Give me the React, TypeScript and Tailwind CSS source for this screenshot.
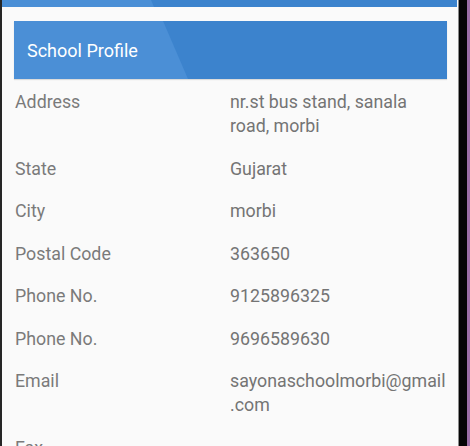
import React from "react";

const rows: { label: string; value: React.ReactNode }[] = [
  { label: "Address", value: "nr.st bus stand, sanala road, morbi" },
  { label: "State", value: "Gujarat" },
  { label: "City", value: "morbi" },
  { label: "Postal Code", value: "363650" },
  { label: "Phone No.", value: "9125896325" },
  { label: "Phone No.", value: "9696589630" },
  {
    label: "Email",
    value: (
      <>
        sayonaschoolmorbi@gmail
        <wbr />
        .com
      </>
    ),
  },
  { label: "Fax", value: "" },
];

export default function App() {
  return (
    <div className="flex h-[446px] w-[470px] overflow-hidden bg-black font-['Roboto',sans-serif]">
      {/* phone screen */}
      <div className="flex w-[459px] shrink-0 flex-col border-l-2 border-r border-l-[#262626] border-r-[#8a8a8a] bg-[#fafafa]">
        {/* app bar edge */}
        <div className="relative mr-[1px] h-[7px] shrink-0 overflow-hidden bg-[#3c83cd]">
          <div className="absolute inset-0 bg-[#4a8fd6] [clip-path:polygon(0_0,149px_0,152px_100%,0_100%)]" />
        </div>

        {/* School Profile header */}
        <div className="relative ml-[12px] mr-[11px] mt-[14px] flex h-[58px] shrink-0 items-center overflow-hidden bg-[#3c83cd] shadow-[0_1px_1px_rgba(0,0,0,0.12)]">
          <div className="absolute inset-0 bg-[#4b8fd6] [clip-path:polygon(0_0,149px_0,174px_100%,0_100%)]" />
          <span className="relative pl-[13px] pt-[2px] text-[18px] leading-[24px] text-white">
            School Profile
          </span>
        </div>

        {/* details */}
        <div className="mt-[2px] flex flex-col">
          {rows.map((r, i) => (
            <div
              key={i}
              className="grid grid-cols-[215px_217px] pb-[9.5px] pl-[13px] pt-[9px] text-[17.8px] leading-[24px] text-[#7a7a7a]"
            >
              <div>{r.label}</div>
              <div className="text-[#747474]">{r.value}</div>
            </div>
          ))}
        </div>
      </div>

      {/* device frame */}
      <div className="w-[8px] shrink-0 bg-[#050505]" />
      <div className="w-[3px] shrink-0 bg-[#9c6fa6]" />
    </div>
  );
}
